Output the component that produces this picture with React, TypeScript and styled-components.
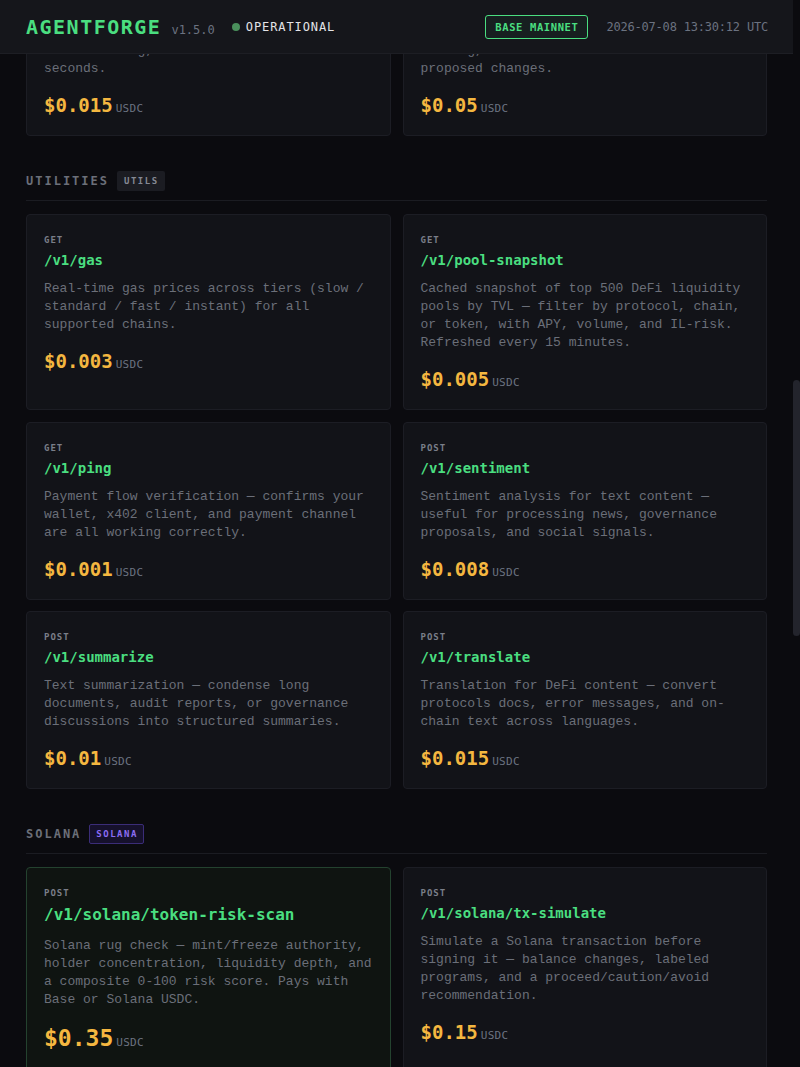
import React, { useLayoutEffect, useRef } from "react";
import styled, { createGlobalStyle, css } from "styled-components";

const headMono = `"DejaVu Sans Mono", "Liberation Mono", monospace`;
const bodyMono = `"Liberation Mono", "DejaVu Sans Mono", monospace`;

const GlobalStyle = createGlobalStyle`
  html { background: #0b0b0f; scrollbar-width: none; }
  html::-webkit-scrollbar { display: none; }
  body {
    margin: 0;
    background: #0b0b0f;
    color: #d4d4d8;
    font-family: ${headMono};
    -webkit-font-smoothing: antialiased;
  }
`;

/* ---------- custom scrollbar overlay ---------- */

const ScrollRail = styled.div`
  position: fixed;
  top: 0;
  right: 0;
  bottom: 0;
  z-index: 20;
  width: 7px;
  display: flex;
  flex-direction: column;
  padding-top: 380px;
  box-sizing: border-box;
  background: #0b0b0f;
`;

const ScrollThumb = styled.div`
  height: 256px;
  border-radius: 4px;
  background: #23242c;
`;

/* ---------- header ---------- */

const TopBar = styled.header`
  position: fixed;
  top: 0;
  left: 0;
  right: 7px;
  z-index: 10;
  height: 54px;
  box-sizing: border-box;
  display: flex;
  align-items: center;
  justify-content: space-between;
  padding: 0 25px 0 26px;
  background: #15161b;
  border-bottom: 1px solid #1d1e24;
`;

const BrandGroup = styled.div`
  display: flex;
  align-items: baseline;
`;

const Brand = styled.span`
  font-family: ${headMono};
  font-size: 20px;
  font-weight: 700;
  letter-spacing: 1.5px;
  color: #4ade80;
`;

const Version = styled.span`
  margin-left: 10px;
  font-size: 12px;
  color: #6b7280;
`;

const Status = styled.span`
  display: inline-flex;
  align-items: center;
  gap: 6px;
  margin-left: 17px;
  font-size: 12px;
  letter-spacing: 0.9px;
  color: #e4e4e7;
  align-self: center;
`;

const Dot = styled.span`
  width: 8px;
  height: 8px;
  border-radius: 50%;
  background: #4a8f5c;
`;

const RightGroup = styled.div`
  display: flex;
  align-items: center;
  gap: 18px;
`;

const NetworkBadge = styled.span`
  height: 24px;
  box-sizing: border-box;
  display: inline-flex;
  align-items: center;
  padding: 0 9px;
  border: 1px solid #4ade80;
  border-radius: 3px;
  background: rgba(74, 222, 128, 0.05);
  color: #4ade80;
  font-size: 10.5px;
  font-weight: 700;
  letter-spacing: 0.6px;
`;

const Clock = styled.span`
  font-size: 12px;
  letter-spacing: -0.2px;
  color: #6b7280;
`;

/* ---------- page ---------- */

const Main = styled.main`
  padding: 86px 33px 90px 26px;
`;

const SectionBlock = styled.section`
  margin-top: 35px;
`;

const SectionHead = styled.div`
  display: flex;
  align-items: center;
  gap: 8px;
  padding-bottom: 9px;
  margin-bottom: 13px;
  border-bottom: 1px solid #1b1c22;
`;

const SectionTitle = styled.h2`
  margin: 0;
  font-family: ${headMono};
  font-size: 12px;
  line-height: 20px;
  font-weight: 700;
  letter-spacing: 2px;
  color: #6b6f79;
`;

const Tag = styled.span<{ $variant: "default" | "solana" }>`
  height: 20px;
  box-sizing: border-box;
  display: inline-flex;
  align-items: center;
  border-radius: 2px;
  font-size: 9px;
  font-weight: 700;
  letter-spacing: 1.5px;
  ${(p) =>
    p.$variant === "solana"
      ? css`
          padding: 0 5px 0 6px;
          border: 1px solid #3b2d78;
          background: #16112c;
          color: #8b6cf2;
        `
      : css`
          padding: 0 6px 0 7px;
          background: #1b1c22;
          color: #858994;
        `}
`;

const Grid = styled.div`
  display: grid;
  grid-template-columns: 1fr 1fr;
  gap: 11.5px 12px;
`;

const Card = styled.article<{ $featured?: boolean }>`
  display: flex;
  flex-direction: column;
  min-width: 0;
  padding: 19px 16px 18px 17px;
  border-radius: 4px;
  background: ${(p) => (p.$featured ? "#0f1411" : "#121318")};
  border: 1px solid ${(p) => (p.$featured ? "#24422f" : "#1c1d24")};
`;

const Method = styled.span`
  font-family: ${headMono};
  font-size: 9px;
  line-height: 12px;
  font-weight: 700;
  letter-spacing: 1px;
  color: #7a7e88;
  margin-bottom: 6px;
`;

const Path = styled.h3<{ $featured?: boolean }>`
  margin: 0 0 12px;
  font-family: ${headMono};
  font-weight: 700;
  font-size: ${(p) => (p.$featured ? "16px" : "14px")};
  line-height: ${(p) => (p.$featured ? "20px" : "16px")};
  color: #4ade80;
`;

const Desc = styled.p`
  margin: 0;
  font-family: ${bodyMono};
  font-size: 13px;
  line-height: 18px;
  color: #6b6f79;
`;

const PriceRow = styled.div`
  display: flex;
  align-items: baseline;
  gap: 3px;
  margin-top: 15px;
`;

const Price = styled.span<{ $featured?: boolean }>`
  font-family: ${headMono};
  font-weight: 700;
  font-size: ${(p) => (p.$featured ? "23px" : "19px")};
  line-height: ${(p) => (p.$featured ? "28px" : "24px")};
  color: #f4b740;
`;

const Unit = styled.span`
  font-size: 11px;
  letter-spacing: 0.3px;
  color: #6b7280;
`;

/* ---------- data ---------- */

type Endpoint = {
  method: "GET" | "POST";
  path: string;
  desc: string;
  price: string;
  featured?: boolean;
};

type SectionData = {
  title: string;
  tag: string;
  variant?: "default" | "solana";
  anchor?: boolean;
  endpoints: Endpoint[];
};

const sections: SectionData[] = [
  {
    title: "SECURITY",
    tag: "RISK",
    endpoints: [
      {
        method: "GET",
        path: "/v1/oracle-check",
        desc: "Oracle sanity check — Chainlink & Pyth feed deviation vs. DEX spot, round heartbeat lag, and staleness in under 30 seconds.",
        price: "$0.015",
      },
      {
        method: "POST",
        path: "/v1/governance",
        desc: "DAO proposal review — decodes calldata, flags admin/upgrade actions with risk scoring, vote math and a diff of the proposed changes.",
        price: "$0.05",
      },
    ],
  },
  {
    title: "UTILITIES",
    tag: "UTILS",
    anchor: true,
    endpoints: [
      { method: "GET", path: "/v1/gas", desc: "Real-time gas prices across tiers (slow / standard / fast / instant) for all supported chains.", price: "$0.003" },
      { method: "GET", path: "/v1/pool-snapshot", desc: "Cached snapshot of top 500 DeFi liquidity pools by TVL — filter by protocol, chain, or token, with APY, volume, and IL-risk. Refreshed every 15 minutes.", price: "$0.005" },
      { method: "GET", path: "/v1/ping", desc: "Payment flow verification — confirms your wallet, x402 client, and payment channel are all working correctly.", price: "$0.001" },
      { method: "POST", path: "/v1/sentiment", desc: "Sentiment analysis for text content — useful for processing news, governance proposals, and social signals.", price: "$0.008" },
      { method: "POST", path: "/v1/summarize", desc: "Text summarization — condense long documents, audit reports, or governance discussions into structured summaries.", price: "$0.01" },
      { method: "POST", path: "/v1/translate", desc: "Translation for DeFi content — convert protocols docs, error messages, and on-chain text across languages.", price: "$0.015" },
    ],
  },
  {
    title: "SOLANA",
    tag: "SOLANA",
    variant: "solana",
    endpoints: [
      { method: "POST", path: "/v1/solana/token-risk-scan", desc: "Solana rug check — mint/freeze authority, holder concentration, liquidity depth, and a composite 0-100 risk score. Pays with Base or Solana USDC.", price: "$0.35", featured: true },
      { method: "POST", path: "/v1/solana/tx-simulate", desc: "Simulate a Solana transaction before signing it — balance changes, labeled programs, and a proceed/caution/avoid recommendation.", price: "$0.15" },
    ],
  },
];

/* ---------- components ---------- */

function EndpointCard({ ep }: { ep: Endpoint }) {
  return (
    <Card $featured={ep.featured}>
      <Method>{ep.method}</Method>
      <Path $featured={ep.featured}>{ep.path}</Path>
      <Desc>{ep.desc}</Desc>
      <PriceRow>
        <Price $featured={ep.featured}>{ep.price}</Price>
        <Unit>USDC</Unit>
      </PriceRow>
    </Card>
  );
}

export default function App() {
  const anchorRef = useRef<HTMLDivElement>(null);

  useLayoutEffect(() => {
    const el = anchorRef.current;
    if (!el) return;
    const top = el.getBoundingClientRect().top + window.scrollY;
    window.scrollTo(0, top - 171);
  }, []);

  return (
    <>
      <GlobalStyle />
      <TopBar>
        <BrandGroup>
          <Brand>AGENTFORGE</Brand>
          <Version>v1.5.0</Version>
          <Status>
            <Dot />
            OPERATIONAL
          </Status>
        </BrandGroup>
        <RightGroup>
          <NetworkBadge>BASE MAINNET</NetworkBadge>
          <Clock>2026-07-08 13:30:12 UTC</Clock>
        </RightGroup>
      </TopBar>
      <ScrollRail>
        <ScrollThumb />
      </ScrollRail>
      <Main>
        {sections.map((s) => (
          <SectionBlock key={s.title}>
            <SectionHead ref={s.anchor ? anchorRef : undefined}>
              <SectionTitle>{s.title}</SectionTitle>
              <Tag $variant={s.variant ?? "default"}>{s.tag}</Tag>
            </SectionHead>
            <Grid>
              {s.endpoints.map((ep) => (
                <EndpointCard key={ep.path} ep={ep} />
              ))}
            </Grid>
          </SectionBlock>
        ))}
      </Main>
    </>
  );
}
